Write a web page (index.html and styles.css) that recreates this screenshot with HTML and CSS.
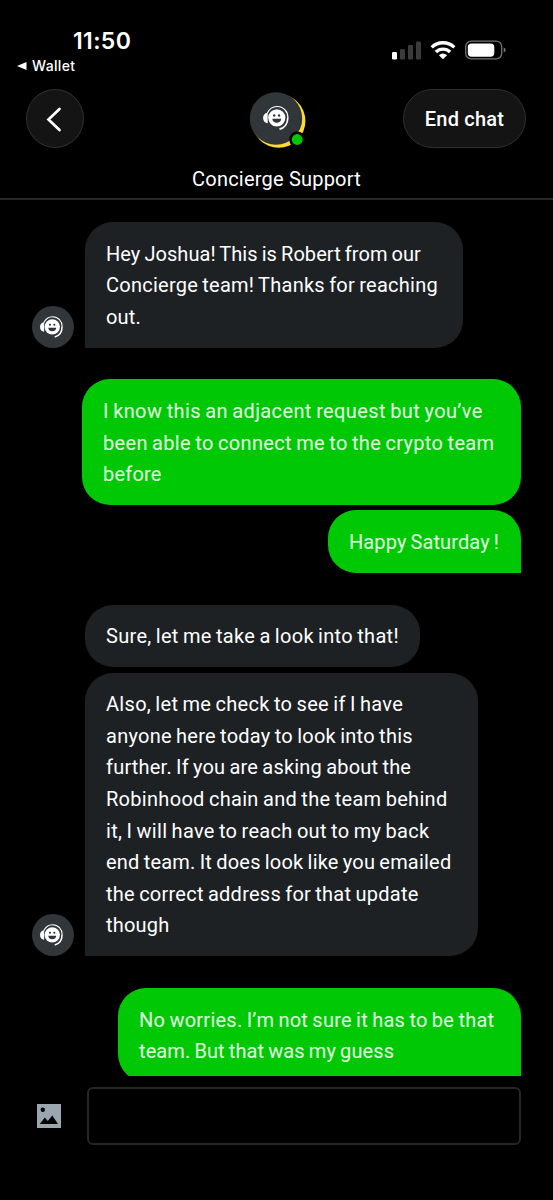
FILE: index.html
```
<!DOCTYPE html>
<html lang="en">
<head>
<meta charset="utf-8">
<title>Concierge Support</title>
<link rel="stylesheet" href="styles.css">
</head>
<body>
<svg class="defs" width="0" height="0" aria-hidden="true">
  <symbol id="agent" viewBox="0 0 28 28">
    <path fill="#fff" d="M5.2 8.8v10.4C2 19 .6 16.800.6 14S2 9 5.2 8.800z"/>
    <path fill="none" stroke="#fff" stroke-width="1.2" d="M4.800 9.200C7 4.500 10.500 2.500 14.500 2.500c6.500 0 10.900 5 10.900 11.200"/>
    <path fill="none" stroke="#fff" stroke-width="1.700" d="M25.300 13.500c0 6-3.300 10.500-8.300 11.700"/>
    <circle cx="14.300" cy="13.800" r="8.600" fill="#fff"/>
    <circle cx="11.700" cy="11.500" r="1.200" fill="#30363a"/><circle cx="16.600" cy="11.500" r="1.200" fill="#30363a"/>
    <path fill="#30363a" d="M9.800 14.800h9c-.3 5.300-8.700 5.300-9 0z"/>
  </symbol>
</svg>
<div class="phone">
  <header class="status">
    <div class="status-left">
      <div class="clock">11:50</div>
      <div class="return"><svg width="10" height="8" viewBox="0 0 10 8"><path d="M0 4 9.500 0v8z" fill="#fff"/></svg>Wallet</div>
    </div>
    <div class="status-right">
      <svg width="30" height="20" viewBox="0 0 30 20"><rect x="0" y="12" width="5" height="7.500" rx="1.300" fill="#fff"/><g fill="#3b3b3b"><rect x="8" y="9" width="5" height="10.500" rx="1.300"/><rect x="16" y="5" width="5" height="14.500" rx="1.300"/><rect x="24" y="1.500" width="5" height="18" rx="1.300"/></g></svg>
      <svg class="wifi" width="26" height="20" viewBox="0 0 26 20"><g fill="none" stroke="#fff" stroke-width="3.400"><path d="M1.700 7.400a16.200 16.200 0 0 1 22.600 0"/><path d="M5.900 12a10.200 10.200 0 0 1 14.200 0"/></g><path d="M8.900 15.200a5.900 5.900 0 0 1 8.200 0L13 19.300z" fill="#fff"/></svg>
      <svg width="42" height="20" viewBox="0 0 42 20"><rect x=".7" y="1.200" width="36" height="17.700" rx="5.500" fill="none" stroke="#747474" stroke-width="1.300"/><rect x="2.800" y="3.500" width="26.500" height="13.200" rx="3.700" fill="#fff"/><path d="M38.700 7.500c2.600.7 2.600 4.300 0 5z" fill="#777"/></svg>
    </div>
  </header>
  <nav class="nav">
    <button class="back" aria-label="Back"><svg width="58" height="58" viewBox="0 0 58 58"><path d="M33.500 19 22.500 29.500l11 10.500" fill="none" stroke="#fff" stroke-width="2.700" stroke-linecap="round" stroke-linejoin="miter"/></svg></button>
    <svg class="portrait" width="60" height="60" viewBox="0 0 60 60"><circle cx="30.700" cy="31" r="26.700" fill="#ffdc32"/><circle cx="28" cy="28.500" r="26.200" fill="#30363a"/><use href="#agent" x="14.500" y="14" width="28" height="28"/><circle cx="49.200" cy="49.500" r="8" fill="#000"/><circle cx="49.200" cy="49.500" r="5.400" fill="#00c805"/></svg>
    <button class="end">End chat</button>
  </nav>
  <h1 class="title">Concierge Support</h1>
  <main class="chat">
    <section class="incoming">
      <svg class="avatar" viewBox="0 0 42 42"><circle cx="21" cy="21" r="21" fill="#30363a"/><use href="#agent" x="7.500" y="8.500" width="25" height="25"/></svg>
      <div class="stack"><p class="bubble tail w1"><span class="t0">Hey Joshua! This is Robert from our</span><span class="t3">Concierge team! Thanks for reaching</span><span>out.</span></p></div>
    </section>
    <section class="outgoing">
      <p class="bubble w2"><span class="t6">I know this an adjacent request but you’ve</span><span class="t5">been able to connect me to the crypto team</span><span>before</span></p>
      <p class="bubble tail w3"><span class="t1">Happy Saturday !</span></p>
    </section>
    <section class="incoming">
      <svg class="avatar" viewBox="0 0 42 42"><circle cx="21" cy="21" r="21" fill="#30363a"/><use href="#agent" x="7.500" y="8.500" width="25" height="25"/></svg>
      <div class="stack">
        <p class="bubble w4"><span class="t4">Sure, let me take a look into that!</span></p>
        <p class="bubble tail w5"><span class="t4">Also, let me check to see if I have</span><span class="t3">anyone here today to look into this</span><span class="t2">further. If you are asking about the</span><span class="t4">Robinhood chain and the team behind</span><span class="t4">it, I will have to reach out to my back</span><span class="t2">end team. It does look like you emailed</span><span class="t3">the correct address for that update</span><span>though</span></p>
      </div>
    </section>
    <section class="outgoing">
      <p class="bubble tail w6"><span class="t3">No worries. I’m not sure it has to be that</span><span class="t1">team. But that was my guess</span></p>
    </section>
  </main>
  <footer class="composer">
    <svg width="24" height="24" viewBox="0 0 24 24"><path fill="#9aa7ae" d="M0 0h24v24H0z"/><circle cx="5.800" cy="5.800" r="2.200"/><path d="m2.800 20 5-6.500 3 3.600 4.500-5.600L21 20z"/></svg>
    <div class="field"></div>
  </footer>
</div>
</body>
</html>
```
FILE: styles.css
```
* { box-sizing: border-box; }
body { margin: 0; background: #000; color: #fff; font-family: Roboto, sans-serif; }
.defs { display: block; height: 0; }
.phone { width: 553px; height: 1200px; display: flex; flex-direction: column; overflow: hidden; }
.status { height: 89px; flex: none; display: flex; justify-content: space-between; padding: 27px 46px 0 17px; font-family: Inter, sans-serif; }
.clock { margin-left: 56px; font-size: 23px; line-height: 29px; font-weight: 600; letter-spacing: .35px; }
.return { display: flex; align-items: center; gap: 5px; font-size: 14px; line-height: 20px; font-weight: 500; letter-spacing: .35px; }
.status-right { display: flex; padding-top: 13px; }
.status-right svg { display: block; }
.wifi { margin: 0 9px 0 8.500px; }
.nav { height: 60px; flex: none; display: grid; grid-template-columns: 1fr 60px 1fr; align-items: start; padding: 0 27px 0 26px; }
button { display: block; padding: 0; color: #fff; border: 1px solid #303030; background: #141414; font: 500 20px/58px Roboto, sans-serif; }
.back { width: 58px; height: 59px; border-radius: 50%; }
.back svg { display: block; margin: -1px; }
.portrait { display: block; margin: 1px 0 0 1.500px; }
.end { justify-self: end; width: 123px; height: 59px; border-radius: 30px; letter-spacing: .2px; }
.title { height: 51px; flex: none; margin: 0; padding-top: 14px; border-bottom: 2px solid #24282b; text-align: center; font-size: 20px; line-height: 32px; font-weight: 400; letter-spacing: .2px; }
.chat { height: 876px; flex: none; overflow: hidden; padding: 22px 32px 0; display: flex; flex-direction: column; gap: 31.700px; }
.chat > section { flex: none; }
.incoming { display: flex; align-items: flex-end; gap: 11px; }
.avatar { width: 42px; height: 42px; flex: none; }
.stack, .outgoing { display: flex; flex-direction: column; gap: 5.600px; }
.outgoing { align-items: flex-end; }
.bubble { margin: 0; padding: 16.800px 21px 14px; border-radius: 28px; background: #1e2124; font-size: 20px; line-height: 31.600px; letter-spacing: .2px; word-spacing: -1px; white-space: nowrap; }
.bubble span { display: block; }
.incoming .tail { border-bottom-left-radius: 0; }
.outgoing .tail { border-bottom-right-radius: 0; }
.outgoing .bubble { background: #00c805; color: #e2ffe2; }
.t0 { letter-spacing: .06px; }
.t1 { letter-spacing: .1px; }
.t2 { letter-spacing: .2px; }
.t3 { letter-spacing: .25px; }
.t4 { letter-spacing: .3px; }
.t5 { letter-spacing: .33px; }
.t6 { letter-spacing: .38px; }
.w1 { width: 378px; }
.w2 { width: 439px; }
.w3 { width: 193px; }
.w4 { width: 335px; }
.w5 { width: 393px; }
.w6 { width: 403px; }
.composer { display: flex; align-items: center; justify-content: space-between; height: 58px; margin-top: 11px; padding: 0 32px 0 37px; }
.field { width: 434px; height: 58px; border: 2px solid #242729; border-radius: 6px; }
```
